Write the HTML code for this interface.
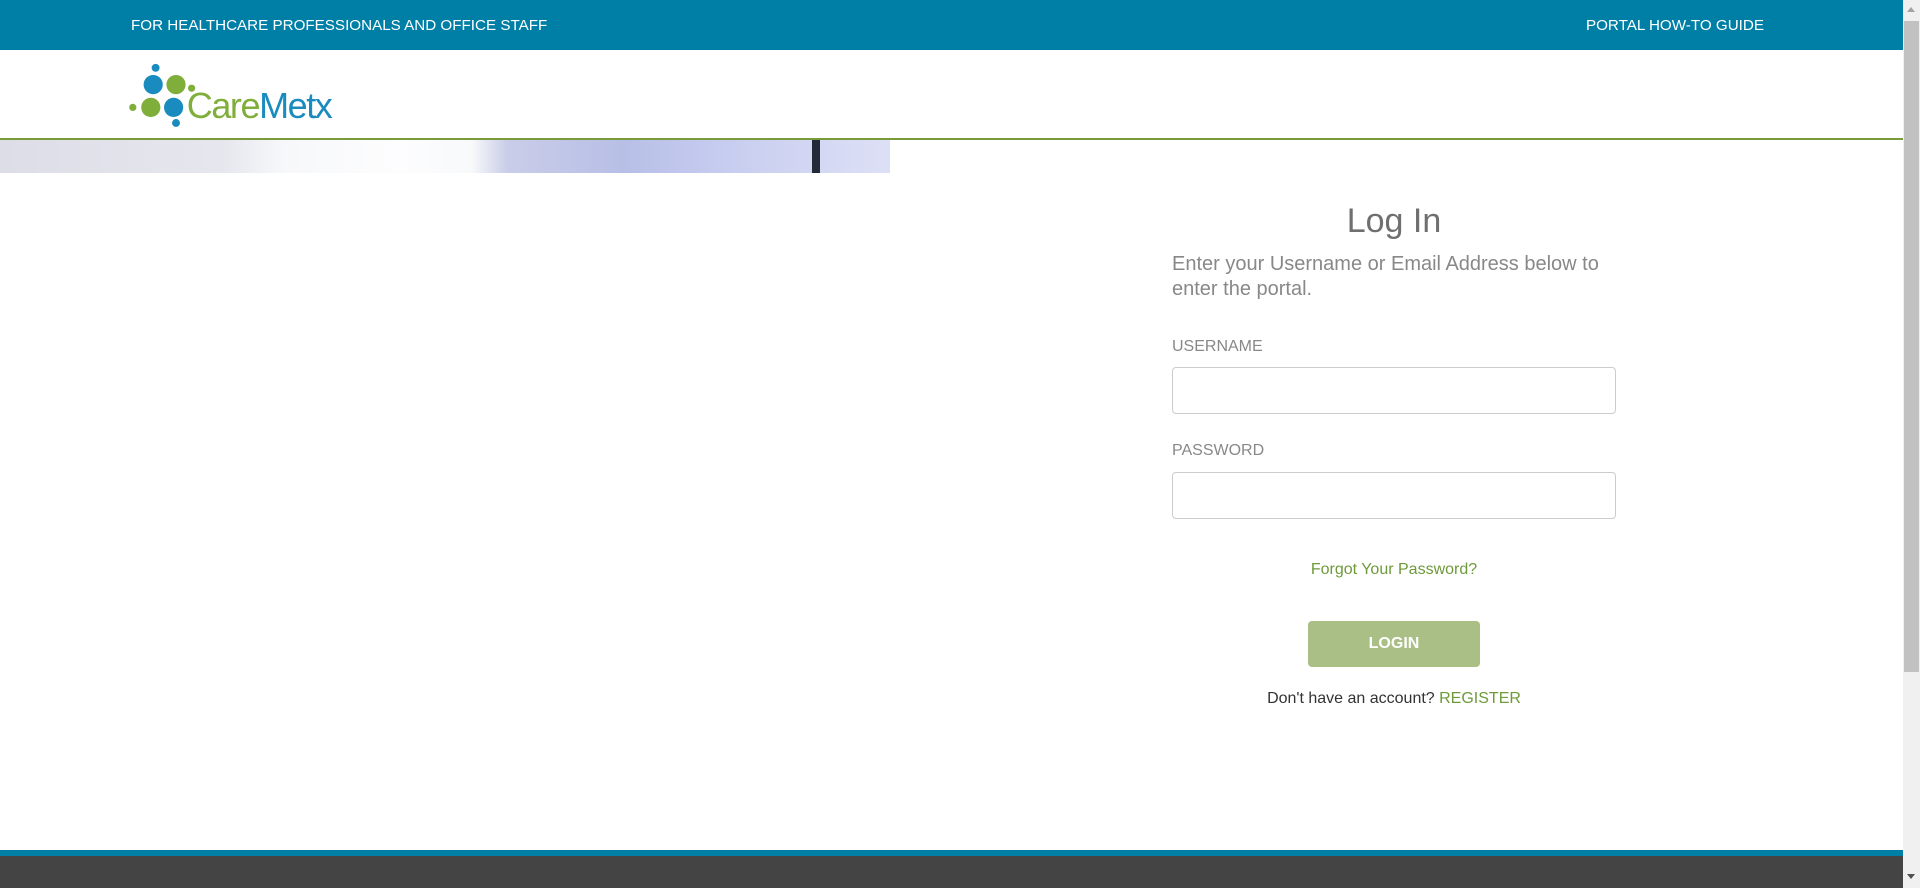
<!DOCTYPE html>
<html><head><meta charset="utf-8"><style>
*{box-sizing:border-box;margin:0;padding:0}
body{width:1920px;height:888px;overflow:hidden;font-family:"Liberation Sans",Arial,sans-serif;background:#fff;position:relative}
.top{position:absolute;left:0;top:0;width:1903px;height:50px;background:#007fa6;color:#fff;font-size:15.2px}
.top .l{position:absolute;left:131px;top:17px}
.top .r{position:absolute;right:139px;top:17px}
.hdr{position:absolute;left:0;top:50px;width:1903px;height:90px;border-bottom:2px solid #7a9a3c}
.strip{position:absolute;left:0;top:140px;width:890px;height:33px;background:linear-gradient(90deg,#dcdde6 0%,#e6e7ee 25%,#f7f8fa 32%,#fdfdfe 45%,#f8f9fb 53%,#c9cde8 57%,#b8bfe6 70%,#c5cbef 80%,#dde0f5 100%)}
.strip i{position:absolute;left:812px;top:0;width:8px;height:33px;background:#222a38}
.form{position:absolute;left:1172px;top:0;width:444px;color:#777}
h1{position:absolute;top:202px;width:444px;text-align:center;font-weight:normal;font-size:34px;color:#6f6f6f}
.p{position:absolute;top:252px;width:444px;font-size:20px;line-height:25px;color:#888}
.lab{position:absolute;font-size:16px;color:#888}
.in{position:absolute;left:0;width:444px;height:47px;border:1px solid #ccc;border-radius:4px}
.fg{position:absolute;top:561px;width:444px;text-align:center;font-size:16px;color:#6e9a3a}
.btn{position:absolute;left:136px;top:621px;width:172px;height:46px;background:#a9bf85;border-radius:4px;color:#fff;font-weight:bold;font-size:16px;text-align:center;line-height:46px}
.reg{position:absolute;top:690px;width:444px;text-align:center;font-size:16px;color:#333}
.reg span{color:#6e9a3a}
.ft1{position:absolute;left:0;top:850px;width:1903px;height:6px;background:#007fa6}
.ft2{position:absolute;left:0;top:856px;width:1903px;height:32px;background:#444}
.sb{position:absolute;left:1903px;top:0;width:17px;height:888px;background:#f0f0f0}
.th{position:absolute;left:1904px;top:21px;width:15px;height:651px;background:#c1c1c1}
</style></head><body>
<div class="top"><span class="l">FOR HEALTHCARE PROFESSIONALS AND OFFICE STAFF</span><span class="r">PORTAL HOW-TO GUIDE</span></div>
<div class="hdr">
<svg width="264" height="84" style="position:absolute;left:128px;top:13px" viewBox="0 0 220 70">
<circle cx="23" cy="4" r="3.3" fill="#1a8bbf"/>
<circle cx="21" cy="18" r="8" fill="#1a8bbf"/>
<circle cx="40" cy="18" r="8" fill="#7fae3a"/>
<circle cx="53" cy="21" r="3" fill="#7fae3a"/>
<circle cx="4" cy="37" r="3" fill="#7fae3a"/>
<circle cx="19" cy="37" r="8" fill="#7fae3a"/>
<circle cx="38" cy="37" r="8" fill="#1a8bbf"/>
<circle cx="40" cy="50" r="3.3" fill="#1a8bbf"/>
<text x="49" y="46" font-family="Liberation Sans,sans-serif" font-size="30" letter-spacing="-1.2"><tspan fill="#7fae3a">Care</tspan><tspan fill="#1a8bbf">Metx</tspan></text>
</svg>
</div>
<div class="strip"><i></i></div>
<div class="form">
<h1>Log In</h1>
<div class="p">Enter your Username or Email Address below to enter the portal.</div>
<div class="lab" style="top:338px">USERNAME</div>
<div class="in" style="top:367px"></div>
<div class="lab" style="top:442px">PASSWORD</div>
<div class="in" style="top:472px"></div>
<div class="fg">Forgot Your Password?</div>
<div class="btn">LOGIN</div>
<div class="reg">Don't have an account? <span>REGISTER</span></div>
</div>
<div class="ft1"></div><div class="ft2"></div>
<div class="sb"></div><div class="th"></div>
<div style="position:absolute;left:1907px;top:7px;border:4px solid transparent;border-bottom:5px solid #a3a3a3;border-top:0"></div>
<div style="position:absolute;left:1907px;top:874px;border:4px solid transparent;border-top:5px solid #505050;border-bottom:0"></div>
</body></html>
